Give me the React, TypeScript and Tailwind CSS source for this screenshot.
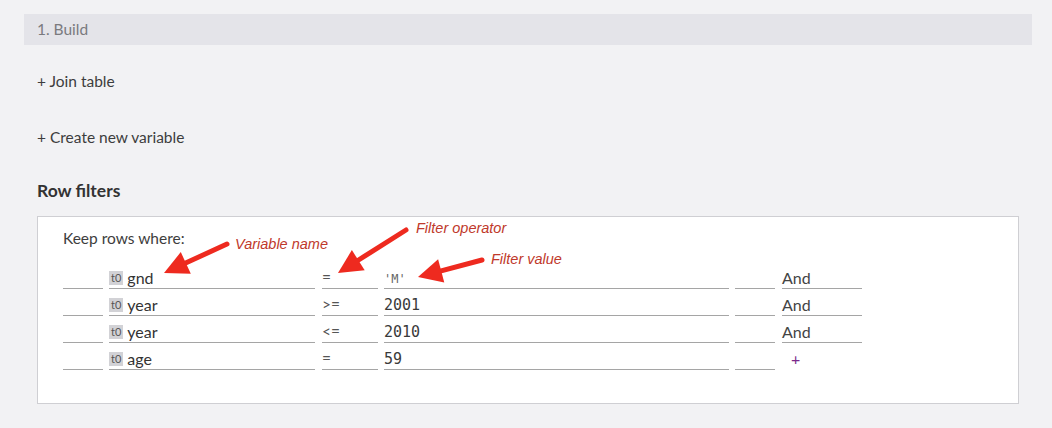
import React from "react";

const sans = { fontFamily: "Lato, 'Open Sans', sans-serif" };
const mono = { fontFamily: "'DejaVu Sans Mono', 'Liberation Mono', monospace" };
const anno = { fontFamily: "'Liberation Sans', Arial, sans-serif" };

type Row = { name: string; op: string; value: string; join?: string };
const rows: Row[] = [
  { name: "gnd", op: "=", value: "'M'", join: "And" },
  { name: "year", op: ">=", value: "2001", join: "And" },
  { name: "year", op: "<=", value: "2010", join: "And" },
  { name: "age", op: "=", value: "59" },
];

function Arrow({ x1, y1, x2, y2 }: { x1: number; y1: number; x2: number; y2: number }) {
  const dx = x2 - x1;
  const dy = y2 - y1;
  const len = Math.sqrt(dx * dx + dy * dy);
  const ux = dx / len;
  const uy = dy / len;
  const headLen = 24;
  const headW = 12;
  const bx = x2 - ux * headLen;
  const by = y2 - uy * headLen;
  const px = -uy;
  const py = ux;
  const pts = `${x2},${y2} ${bx + px * headW},${by + py * headW} ${bx - px * headW},${by - py * headW}`;
  return (
    <g>
      <line x1={x1} y1={y1} x2={bx + ux * 2} y2={by + uy * 2} stroke="#ee2a1f" strokeWidth={5} strokeLinecap="round" />
      <polygon points={pts} fill="#ee2a1f" />
    </g>
  );
}

export default function App() {
  return (
    <div className="w-[1052px] h-[428px] bg-[#f2f2f4] overflow-hidden text-[#3a3a3a]" style={sans}>
      <div className="pl-[24px] pr-[20px] pt-[14px]">
        <div className="h-[31px] bg-[#e4e4e9] flex items-center pl-[13px] text-[15.5px] text-[#7a7a7e]">
          1. Build
        </div>
      </div>
      <div className="pl-[37px] pr-[33px]">
        <div className="mt-[26px] h-[20px] leading-[20px] text-[15.5px] text-[#3d3d3d]">+ Join table</div>
        <div className="mt-[36px] h-[20px] leading-[20px] text-[15.5px] text-[#3d3d3d]">+ Create new variable</div>
        <div className="mt-[33px] h-[22px] leading-[22px] text-[17.5px] font-bold text-[#333]">Row filters</div>
        <div className="relative mt-[14px] h-[188px] bg-white border border-[#cfcfd3]">
          <div className="pl-[25px] pt-[11px]">
            <div className="h-[20px] leading-[20px] text-[15.5px] text-[#3d3d3d]">Keep rows where:</div>
            <div className="mt-[19px] flex flex-col gap-[5px]">
              {rows.map((r, i) => (
                <div key={i} className="flex items-end h-[22px]">
                  <div className="w-[40px] h-[22px] border-b border-[#a5a5a5]" />
                  <div className="ml-[6px] w-[206px] h-[22px] border-b border-[#a5a5a5] flex items-end pb-[1px]">
                    <span className="bg-[#d2d2d6] text-[#555] text-[11px] leading-[14px] h-[14px] px-[2px] mr-[4px] mb-[2px]">t0</span>
                    <span className="text-[#333] text-[16px] leading-[19px]">{r.name}</span>
                  </div>
                  <div className="ml-[7px] w-[56px] h-[22px] border-b border-[#a5a5a5] flex items-end pb-[1px] text-[#555] text-[15.5px] leading-[19px]">
                    {r.op}
                  </div>
                  <div
                    className={
                      "ml-[6px] w-[345px] h-[22px] border-b border-[#a5a5a5] flex items-end " +
                      (i === 0 ? "text-[12px] leading-[17px] text-[#666]" : "text-[15px] leading-[19px] text-[#3a3a3a]")
                    }
                    style={mono}
                  >
                    {r.value}
                  </div>
                  <div className="ml-[6px] w-[40px] h-[22px] border-b border-[#a5a5a5]" />
                  {r.join ? (
                    <div className="ml-[7px] w-[80px] h-[22px] border-b border-[#a5a5a5] flex items-end pb-[1px] text-[16px] leading-[19px] text-[#444]">
                      {r.join}
                    </div>
                  ) : (
                    <div className="ml-[7px] w-[80px] h-[22px] flex items-center pl-[9px] text-[16px] text-[#7b2a8c]">+</div>
                  )}
                </div>
              ))}
            </div>
          </div>

          <svg className="absolute left-0 top-0 pointer-events-none" width="982" height="188">
            <Arrow x1={189} y1={27} x2={126} y2={56} />
            <Arrow x1={368} y1={13} x2={300} y2={56} />
            <Arrow x1={444} y1={43} x2={380} y2={60} />
          </svg>
          <div className="absolute left-[197px] top-[18px] text-[14.5px] italic text-[#c0392b] leading-[18px]" style={anno}>
            Variable name
          </div>
          <div className="absolute left-[378px] top-[2px] text-[14.5px] italic text-[#c0392b] leading-[18px]" style={anno}>
            Filter operator
          </div>
          <div className="absolute left-[453px] top-[33px] text-[14.5px] italic text-[#c0392b] leading-[18px]" style={anno}>
            Filter value
          </div>
        </div>
      </div>
    </div>
  );
}
